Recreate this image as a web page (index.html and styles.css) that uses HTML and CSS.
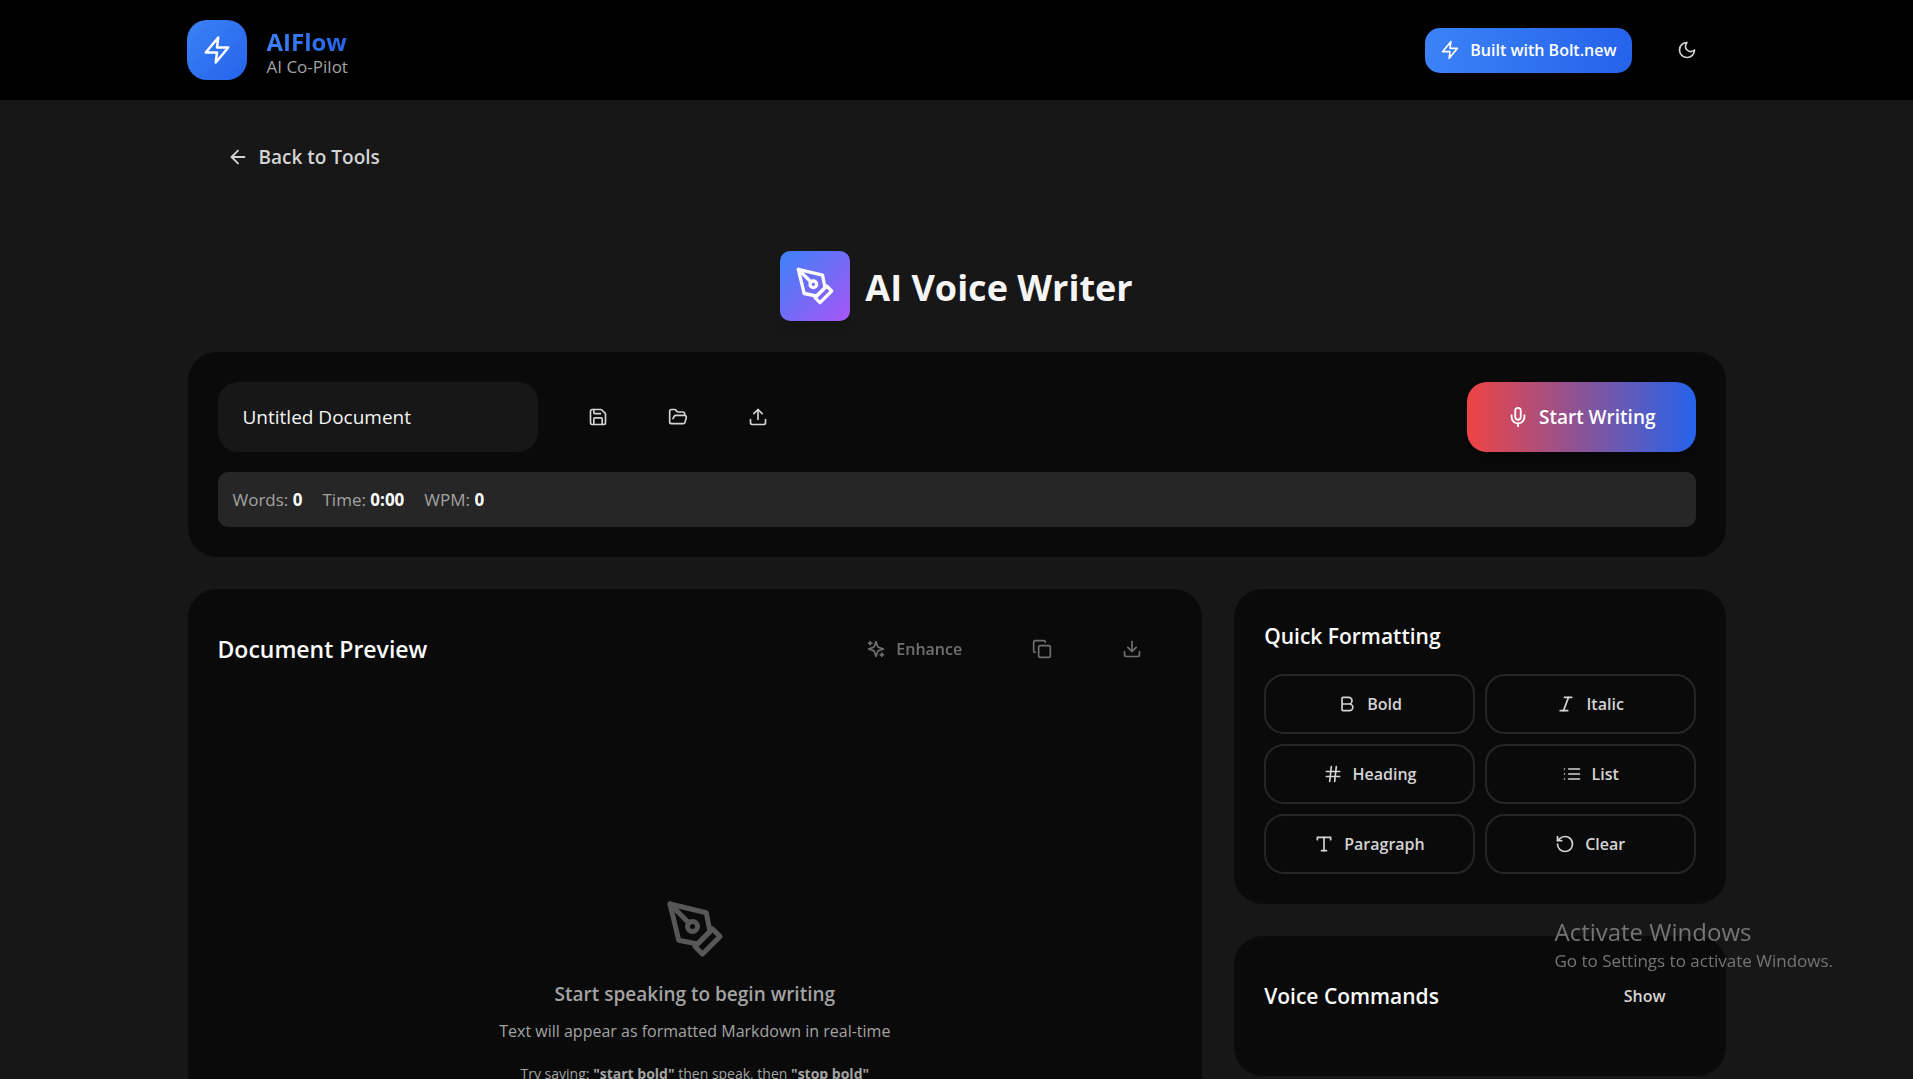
FILE: index.html
```html
<!DOCTYPE html>
<html lang="en">
<head>
<meta charset="utf-8">
<meta name="viewport" content="width=device-width, initial-scale=1">
<title>AIFlow - AI Voice Writer</title>
<link rel="stylesheet" href="styles.css">
</head>
<body>

<header class="topbar">
  <div class="container topbar-inner">
    <a class="brand" href="#">
      <span class="brand-logo">
        <svg class="icon icon-lg" viewBox="0 0 24 24"><path d="M13 2 3 14h9l-1 8 10-12h-9l1-8z"/></svg>
      </span>
      <span class="brand-text">
        <span class="brand-name">AIFlow</span>
        <span class="brand-sub">AI Co-Pilot</span>
      </span>
    </a>
    <div class="topbar-actions">
      <a class="bolt-link" href="#">
        <svg class="icon" viewBox="0 0 24 24"><path d="M13 2 3 14h9l-1 8 10-12h-9l1-8z"/></svg>
        Built with Bolt.new
      </a>
      <button class="btn btn-icon" type="button" aria-label="Toggle theme">
        <svg class="icon" viewBox="0 0 24 24"><path d="M12 3a6 6 0 0 0 9 9 9 9 0 1 1-9-9Z"/></svg>
      </button>
    </div>
  </div>
</header>

<main class="container">
  <button class="btn btn-back" type="button">
    <svg class="icon icon-md" viewBox="0 0 24 24"><path d="m12 19-7-7 7-7"/><path d="M19 12H5"/></svg>
    Back to Tools
  </button>

  <div class="page-title">
    <span class="page-logo">
      <svg class="icon icon-xl" viewBox="0 0 24 24"><path d="m12 19 7-7 3 3-7 7-3-3z"/><path d="m18 13-1.5-7.5L2 2l3.5 14.5L13 18l5-5z"/><path d="m2 2 7.586 7.586"/><circle cx="11" cy="11" r="2"/></svg>
    </span>
    <h1>AI Voice Writer</h1>
  </div>

  <section class="card toolbar">
    <div class="toolbar-row">
      <input class="doc-title" type="text" value="Untitled Document" aria-label="Document title">
      <div class="file-actions">
        <button class="btn btn-icon" type="button" aria-label="Save">
          <svg class="icon" viewBox="0 0 24 24"><path d="M15.2 3a2 2 0 0 1 1.4.6l3.8 3.8a2 2 0 0 1 .6 1.4V19a2 2 0 0 1-2 2H5a2 2 0 0 1-2-2V5a2 2 0 0 1 2-2z"/><path d="M17 21v-7a1 1 0 0 0-1-1H8a1 1 0 0 0-1 1v7"/><path d="M7 3v4a1 1 0 0 0 1 1h7"/></svg>
        </button>
        <button class="btn btn-icon" type="button" aria-label="Open">
          <svg class="icon" viewBox="0 0 24 24"><path d="m6 14 1.5-2.9A2 2 0 0 1 9.24 10H20a2 2 0 0 1 1.94 2.5l-1.54 6a2 2 0 0 1-1.95 1.5H4a2 2 0 0 1-2-2V5a2 2 0 0 1 2-2h3.9a2 2 0 0 1 1.69.9l.81 1.2a2 2 0 0 0 1.67.9H18a2 2 0 0 1 2 2v2"/></svg>
        </button>
        <button class="btn btn-icon" type="button" aria-label="Import">
          <svg class="icon" viewBox="0 0 24 24"><path d="M21 15v4a2 2 0 0 1-2 2H5a2 2 0 0 1-2-2v-4"/><path d="m17 8-5-5-5 5"/><path d="M12 3v12"/></svg>
        </button>
      </div>
      <button class="btn btn-start" type="button">
        <svg class="icon icon-md" viewBox="0 0 24 24"><path d="M12 2a3 3 0 0 0-3 3v7a3 3 0 0 0 6 0V5a3 3 0 0 0-3-3Z"/><path d="M19 10v2a7 7 0 0 1-14 0v-2"/><path d="M12 19v3"/></svg>
        Start Writing
      </button>
    </div>
    <div class="stats">
      <span>Words: <b>0</b></span>
      <span>Time: <b>0:00</b></span>
      <span>WPM: <b>0</b></span>
    </div>
  </section>

  <div class="columns">
    <section class="card preview">
      <div class="preview-head">
        <h2>Document Preview</h2>
        <div class="preview-actions">
          <button class="btn" type="button" disabled>
            <svg class="icon" viewBox="0 0 24 24"><path d="m12 3-1.912 5.813a2 2 0 0 1-1.275 1.275L3 12l5.813 1.912a2 2 0 0 1 1.275 1.275L12 21l1.912-5.813a2 2 0 0 1 1.275-1.275L21 12l-5.813-1.912a2 2 0 0 1-1.275-1.275L12 3Z"/><path d="M5 3v4"/><path d="M19 17v4"/><path d="M3 5h4"/><path d="M17 19h4"/></svg>
            Enhance
          </button>
          <button class="btn btn-icon" type="button" aria-label="Copy" disabled>
            <svg class="icon" viewBox="0 0 24 24"><rect x="8" y="8" width="14" height="14" rx="2"/><path d="M4 16c-1.1 0-2-.9-2-2V4c0-1.1.9-2 2-2h10c1.1 0 2 .9 2 2"/></svg>
          </button>
          <button class="btn btn-icon" type="button" aria-label="Download" disabled>
            <svg class="icon" viewBox="0 0 24 24"><path d="M21 15v4a2 2 0 0 1-2 2H5a2 2 0 0 1-2-2v-4"/><path d="m7 10 5 5 5-5"/><path d="M12 15V3"/></svg>
          </button>
        </div>
      </div>
      <div class="empty">
        <svg class="icon empty-icon" viewBox="0 0 24 24"><path d="m12 19 7-7 3 3-7 7-3-3z"/><path d="m18 13-1.5-7.5L2 2l3.5 14.5L13 18l5-5z"/><path d="m2 2 7.586 7.586"/><circle cx="11" cy="11" r="2"/></svg>
        <p class="empty-title">Start speaking to begin writing</p>
        <p class="empty-text">Text will appear as formatted Markdown in real-time</p>
        <p class="empty-hint">Try saying: <b>"start bold"</b> then speak, then <b>"stop bold"</b></p>
      </div>
    </section>

    <aside class="side">
      <section class="card">
        <h3>Quick Formatting</h3>
        <div class="format-grid">
          <button class="btn btn-outline" type="button">
            <svg class="icon" viewBox="0 0 24 24"><path d="M6 12h9a4 4 0 0 1 0 8H7a1 1 0 0 1-1-1V5a1 1 0 0 1 1-1h7a4 4 0 0 1 0 8"/></svg>
            Bold
          </button>
          <button class="btn btn-outline" type="button">
            <svg class="icon" viewBox="0 0 24 24"><path d="M19 4h-9"/><path d="M14 20H5"/><path d="M15 4 9 20"/></svg>
            Italic
          </button>
          <button class="btn btn-outline" type="button">
            <svg class="icon" viewBox="0 0 24 24"><path d="M4 9h16"/><path d="M4 15h16"/><path d="M10 3 8 21"/><path d="m16 3-2 18"/></svg>
            Heading
          </button>
          <button class="btn btn-outline" type="button">
            <svg class="icon" viewBox="0 0 24 24"><path d="M8 6h13"/><path d="M8 12h13"/><path d="M8 18h13"/><path d="M3 6h.01"/><path d="M3 12h.01"/><path d="M3 18h.01"/></svg>
            List
          </button>
          <button class="btn btn-outline" type="button">
            <svg class="icon" viewBox="0 0 24 24"><path d="M4 7V4h16v3"/><path d="M9 20h6"/><path d="M12 4v16"/></svg>
            Paragraph
          </button>
          <button class="btn btn-outline" type="button">
            <svg class="icon" viewBox="0 0 24 24"><path d="M3 12a9 9 0 1 0 9-9 9.75 9.75 0 0 0-6.74 2.74L3 8"/><path d="M3 3v5h5"/></svg>
            Clear
          </button>
        </div>
      </section>

      <section class="card">
        <div class="voice-head">
          <h3>Voice Commands</h3>
          <button class="btn" type="button">Show</button>
        </div>
      </section>
    </aside>
  </div>
</main>

<div class="watermark">
  <div class="watermark-title">Activate Windows</div>
  <div class="watermark-text">Go to Settings to activate Windows.</div>
</div>

</body>
</html>
```

FILE: styles.css
```css
* { box-sizing: border-box; }

body {
  margin: 0;
  background: #171717;
  color: #fafafa;
  font-family: "Open Sans", "Noto Sans", sans-serif;
  font-size: 17px;
  line-height: 25px;
}
h1, h2, h3, p { margin: 0; }
h1 { padding-top: 4px; font-size: 36px; line-height: 50px; font-weight: 700; color: #f5f5f5; }
h2 { font-size: 23px; line-height: 35px; font-weight: 600; }
h3 { font-size: 21px; line-height: 35px; font-weight: 600; }
a { color: inherit; text-decoration: none; }

.container {
  max-width: 1600px;
  margin: 0 auto;
  padding: 0 30px;
}

/* icons */
.icon {
  width: 20px;
  height: 20px;
  flex: none;
  fill: none;
  stroke: currentColor;
  stroke-width: 2;
  stroke-linecap: round;
  stroke-linejoin: round;
}
.icon-md { width: 22px; height: 22px; }
.icon-lg { width: 30px; height: 30px; }
.icon-xl { width: 40px; height: 40px; }

/* buttons */
.btn {
  display: inline-flex;
  align-items: center;
  justify-content: center;
  gap: 10px;
  height: 60px;
  padding: 0 30px;
  border: 0;
  border-radius: 20px;
  background: transparent;
  color: #d4d4d4;
  font-family: inherit;
  font-size: 16px;
  font-weight: 600;
  cursor: pointer;
}
.btn:disabled { opacity: .5; cursor: default; }
.btn-icon { width: 80px; padding: 0; }
.btn-back { padding: 0 40px; font-size: 19px; }
.btn-outline { padding: 0 10px; border: 2px solid #262626; }
.btn-start {
  height: 70px;
  margin-left: auto;
  padding: 0 40px;
  background: linear-gradient(to right, #ef4444, #2563eb);
  box-shadow: 0 10px 15px -3px rgba(0, 0, 0, .3);
  color: #fff;
  font-size: 19px;
}

/* top bar */
.topbar { background: #000; }
.topbar-inner {
  display: flex;
  align-items: center;
  justify-content: space-between;
  height: 100px;
}
.brand { display: flex; align-items: center; gap: 20px; }
.brand-logo {
  display: flex;
  align-items: center;
  justify-content: center;
  width: 60px;
  height: 60px;
  border-radius: 20px;
  background: linear-gradient(to bottom right, #3b82f6, #2563eb);
  color: #fff;
}
.brand-text {
  display: flex;
  flex-direction: column;
  align-items: flex-start;
  padding-top: 8px;
}
.brand-name {
  font-size: 24px;
  font-weight: 700;
  line-height: 25px;
  background: linear-gradient(to right, #3b82f6, #2563eb);
  -webkit-background-clip: text;
  background-clip: text;
  color: transparent;
}
.brand-sub { color: #a3a3a3; }
.topbar-actions { display: flex; align-items: center; gap: 15px; }
.bolt-link {
  display: flex;
  align-items: center;
  gap: 10px;
  height: 45px;
  padding: 0 15px;
  border-radius: 15px;
  background: linear-gradient(to right, #3b82f6, #2563eb);
  color: #fff;
  font-size: 16px;
  font-weight: 600;
}

/* page title */
.btn-back { margin-top: 27px; }
.page-title {
  display: flex;
  align-items: center;
  justify-content: center;
  gap: 15px;
  margin: 64px 0 30px;
}
.page-logo {
  display: flex;
  padding: 15px;
  border-radius: 10px;
  background: linear-gradient(to bottom right, #3b82f6, #a855f7);
  box-shadow: 0 10px 15px -3px rgba(0, 0, 0, .1);
}

/* cards */
.card {
  padding: 30px;
  border: 1px solid #171717;
  border-radius: 30px;
  background: #0a0a0a;
}
.toolbar { margin-bottom: 30px; }
.toolbar-row { display: flex; align-items: center; gap: 20px; }
.doc-title {
  width: 320px;
  height: 70px;
  padding: 0 25px;
  border: 0;
  border-radius: 20px;
  background: #171717;
  color: #f5f5f5;
  font-family: inherit;
  font-size: 19px;
}
.file-actions { display: flex; }
.stats {
  display: flex;
  gap: 20px;
  margin-top: 20px;
  padding: 15px;
  border-radius: 10px;
  background: #262626;
  color: #a3a3a3;
}
.stats b { color: #fafafa; }

.columns {
  display: grid;
  grid-template-columns: repeat(3, 1fr);
  gap: 30px;
  padding-bottom: 40px;
}
.preview { grid-column: span 2; }
.side { display: flex; flex-direction: column; gap: 30px; }

.preview-head,
.voice-head {
  display: flex;
  align-items: center;
  justify-content: space-between;
  margin-bottom: 20px;
}
.preview-actions { display: flex; gap: 10px; }

/* empty state */
.empty {
  display: flex;
  flex-direction: column;
  align-items: center;
  justify-content: center;
  min-height: 584px;
  color: #a3a3a3;
  text-align: center;
}
.empty-icon { width: 60px; height: 60px; margin-bottom: 20px; opacity: .5; }
.empty-title { margin-bottom: 10px; font-size: 19px; line-height: 30px; font-weight: 600; }
.empty-text { font-size: 16px; }
.empty-hint { margin-top: 20px; font-size: 14px; line-height: 20px; }

.format-grid {
  display: grid;
  grid-template-columns: 1fr 1fr;
  gap: 10px;
  margin-top: 20px;
}

/* desktop overlay */
.watermark {
  position: fixed;
  right: 80px;
  bottom: 106px;
  color: #757575;
  pointer-events: none;
}
.watermark-title { font-size: 24px; line-height: 32px; }
.watermark-text { font-size: 17px; }
```
